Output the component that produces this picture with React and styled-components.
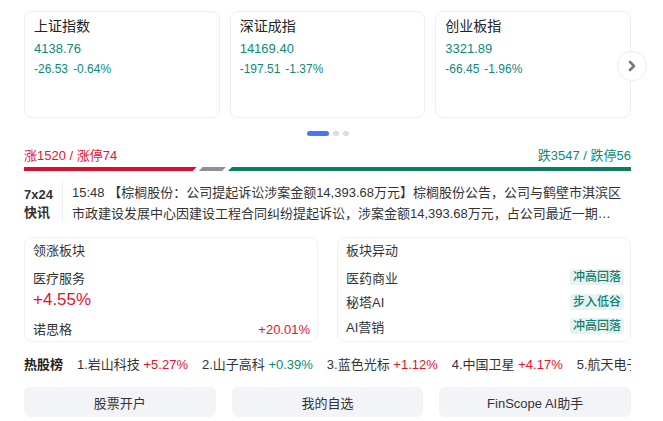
import React from 'react';
import styled, { createGlobalStyle } from 'styled-components';

const RED = '#e3122d';
const GREEN = '#0c8a7a';

const GlobalStyle = createGlobalStyle`
  *, *::before, *::after {
    box-sizing: border-box;
  }
  body {
    margin: 0;
    background: #fff;
    font-family: "Liberation Sans", "Noto Sans CJK SC", sans-serif;
    color: #333;
  }
`;

const Page = styled.div`
  width: 663px;
  padding: 11px 32px 0 24px;
`;

const CardsWrap = styled.div`
  position: relative;
`;

const Cards = styled.div`
  display: grid;
  grid-template-columns: repeat(3, 1fr);
  gap: 10px;
`;

const Card = styled.div`
  height: 107px;
  border: 1px solid #eeeff2;
  border-radius: 8px;
  padding: 4px 9px 0;
`;

const CardTitle = styled.div`
  font-size: 14px;
  line-height: 20px;
  color: #222;
`;

const CardValue = styled.div`
  margin-top: 3px;
  font-size: 13px;
  line-height: 20px;
  color: ${GREEN};
`;

const CardChange = styled.div`
  font-size: 12px;
  line-height: 20px;
  color: ${GREEN};
  display: flex;
  gap: 5px;
`;

const NextButton = styled.div`
  position: absolute;
  right: -16px;
  top: 40px;
  width: 30px;
  height: 30px;
  border-radius: 50%;
  border: 1px solid #ebecef;
  background: #fff;
  display: flex;
  align-items: center;
  justify-content: center;
`;

const Dots = styled.div`
  display: flex;
  justify-content: center;
  gap: 4px;
  margin-top: 13px;
  height: 5px;
`;

const Dot = styled.span`
  height: 5px;
  width: ${p => (p.$active ? '22px' : '6px')};
  border-radius: 3px;
  background: ${p => (p.$active ? '#4d74f5' : '#dcdde2')};
`;

const RiseRow = styled.div`
  margin-top: 11px;
  display: flex;
  justify-content: space-between;
  font-size: 13px;
  line-height: 18px;
`;

const Colored = styled.span`
  color: ${p => p.$color};
`;

const Bar = styled.div`
  margin-top: 2px;
  display: flex;
  gap: 2px;
  height: 4px;
`;

const Segment = styled.div`
  background: ${p => p.$color};
  clip-path: ${p =>
    p.$pos === 'first'
      ? 'polygon(0 0, 100% 0, calc(100% - 4px) 100%, 0 100%)'
      : p.$pos === 'last'
      ? 'polygon(4px 0, 100% 0, 100% 100%, 0 100%)'
      : 'polygon(4px 0, 100% 0, calc(100% - 4px) 100%, 0 100%)'};
`;

const News = styled.div`
  margin-top: 11px;
  display: flex;
`;

const NewsLabel = styled.div`
  width: 39px;
  flex-shrink: 0;
  padding-top: 4px;
  margin-bottom: 3px;
  border-right: 1px solid #eeeff2;
  font-size: 13px;
  line-height: 18px;
  font-weight: 700;
  color: #333;
`;

const NewsText = styled.div`
  padding-left: 9px;
  font-size: 13px;
  line-height: 21px;
  color: #333;
  display: -webkit-box;
  -webkit-line-clamp: 2;
  -webkit-box-orient: vertical;
  overflow: hidden;
`;

const Panels = styled.div`
  margin-top: 12px;
  display: grid;
  grid-template-columns: 1fr 1fr;
  gap: 19px;
`;

const Panel = styled.div`
  height: 105px;
  border: 1px solid #f0f1f3;
  border-radius: 8px;
  padding: 3px ${p => p.$right || 7}px 0 8px;
`;

const PanelTitle = styled.div`
  font-size: 13px;
  line-height: 20px;
  color: #333;
`;

const SectorName = styled.div`
  margin-top: 8px;
  font-size: 13px;
  line-height: 20px;
  color: #333;
`;

const SectorPct = styled.div`
  font-size: 17px;
  line-height: 22px;
  color: ${RED};
`;

const LeaderRow = styled.div`
  margin-top: 9px;
  display: flex;
  justify-content: space-between;
  font-size: 13px;
  line-height: 20px;
`;

const MoveList = styled.div`
  margin-top: 4px;
`;

const MoveRow = styled.div`
  display: flex;
  justify-content: space-between;
  align-items: center;
  height: 24.5px;
  font-size: 13px;
  color: #333;
`;

const Tag = styled.span`
  background: #e6f3f0;
  color: #13806f;
  font-size: 12px;
  font-weight: 500;
  line-height: 16px;
  padding: 0 3px;
  border-radius: 3px;
`;

const HotRow = styled.div`
  margin-top: 13px;
  display: flex;
  gap: 14px;
  font-size: 13px;
  line-height: 20px;
  white-space: nowrap;
  overflow: hidden;
`;

const HotTitle = styled.span`
  font-weight: 700;
  color: #222;
`;

const HotItem = styled.span`
  color: #333;
`;

const Buttons = styled.div`
  margin-top: 12px;
  display: grid;
  grid-template-columns: repeat(3, 1fr);
  gap: 16px;
`;

const Button = styled.div`
  height: 30px;
  border-radius: 6px;
  background: #f3f4f7;
  display: flex;
  align-items: center;
  justify-content: center;
  font-size: 13px;
  color: #333;
`;

const indices = [
  { name: '上证指数', value: '4138.76', change: '-26.53', pct: '-0.64%' },
  { name: '深证成指', value: '14169.40', change: '-197.51', pct: '-1.37%' },
  { name: '创业板指', value: '3321.89', change: '-66.45', pct: '-1.96%' },
];

const breadth = { up: 1520, flat: 240, down: 3547 };

const moves = [
  { name: '医药商业', tag: '冲高回落' },
  { name: '秘塔AI', tag: '步入低谷' },
  { name: 'AI营销', tag: '冲高回落' },
];

const hot = [
  { name: '1.岩山科技', pct: '+5.27%', color: RED },
  { name: '2.山子高科', pct: '+0.39%', color: GREEN },
  { name: '3.蓝色光标', pct: '+1.12%', color: RED },
  { name: '4.中国卫星', pct: '+4.17%', color: RED },
  { name: '5.航天电子', pct: '+3.02%', color: RED },
];

const App = () => (
  <>
    <GlobalStyle />
    <Page>
      <CardsWrap>
        <Cards>
          {indices.map(i => (
            <Card key={i.name}>
              <CardTitle>{i.name}</CardTitle>
              <CardValue>{i.value}</CardValue>
              <CardChange>
                <span>{i.change}</span>
                <span>{i.pct}</span>
              </CardChange>
            </Card>
          ))}
        </Cards>
        <NextButton>
          <svg width="10" height="12" viewBox="0 0 10 12">
            <polyline
              points="3,2 7,6 3,10"
              fill="none"
              stroke="#737789"
              strokeWidth="2.6"
              strokeLinejoin="round"
              strokeLinecap="round"
            />
          </svg>
        </NextButton>
      </CardsWrap>

      <Dots>
        <Dot $active />
        <Dot />
        <Dot />
      </Dots>

      <RiseRow>
        <Colored $color={RED}>涨1520 / 涨停74</Colored>
        <Colored $color={GREEN}>跌3547 / 跌停56</Colored>
      </RiseRow>
      <Bar>
        <Segment $pos="first" $color="#d9102b" style={{ flex: breadth.up }} />
        <Segment $color="#8d8f99" style={{ flex: breadth.flat }} />
        <Segment $pos="last" $color="#0a7c62" style={{ flex: breadth.down }} />
      </Bar>

      <News>
        <NewsLabel>
          7x24
          <br />
          快讯
        </NewsLabel>
        <NewsText>
          15:48 【棕榈股份：公司提起诉讼涉案金额14,393.68万元】棕榈股份公告，公司与鹤壁市淇滨区市政建设发展中心因建设工程合同纠纷提起诉讼，涉案金额14,393.68万元，占公司最近一期（2024年经审计净资产的比例较高）。
        </NewsText>
      </News>

      <Panels>
        <Panel>
          <PanelTitle>领涨板块</PanelTitle>
          <SectorName>医疗服务</SectorName>
          <SectorPct>+4.55%</SectorPct>
          <LeaderRow>
            <span>诺思格</span>
            <Colored $color={RED}>+20.01%</Colored>
          </LeaderRow>
        </Panel>
        <Panel $right={6}>
          <PanelTitle>板块异动</PanelTitle>
          <MoveList>
            {moves.map(m => (
              <MoveRow key={m.name}>
                <span>{m.name}</span>
                <Tag>{m.tag}</Tag>
              </MoveRow>
            ))}
          </MoveList>
        </Panel>
      </Panels>

      <HotRow>
        <HotTitle>热股榜</HotTitle>
        {hot.map(h => (
          <HotItem key={h.name}>
            {h.name} <Colored $color={h.color}>{h.pct}</Colored>
          </HotItem>
        ))}
      </HotRow>

      <Buttons>
        <Button>股票开户</Button>
        <Button>我的自选</Button>
        <Button>FinScope AI助手</Button>
      </Buttons>
    </Page>
  </>
);

export default App;
